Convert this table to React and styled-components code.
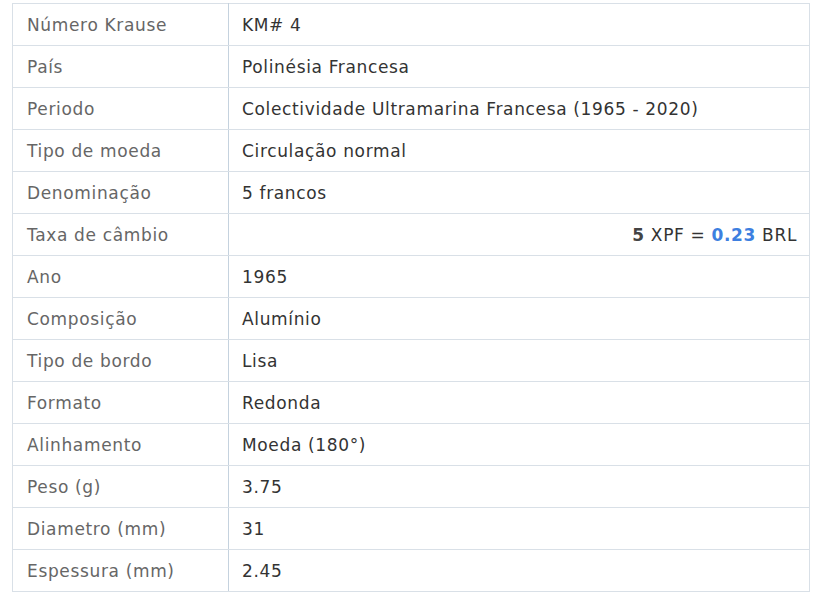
import React from "react";
import styled, { createGlobalStyle } from "styled-components";

const Global = createGlobalStyle`
  html, body { margin: 0; padding: 0; background: #fff; }
  body { font-family: "DejaVu Sans", Verdana, sans-serif; }
`;

const Page = styled.div`
  padding: 3px 18px 0 12px;
`;

const Table = styled.table`
  width: 798px;
  border-collapse: collapse;
  font-size: 17px;
  letter-spacing: 0.65px;
`;

const Row = styled.tr`
  height: 42px;
`;

const Label = styled.td`
  width: 187px;
  padding: 1px 14px 0 14px;
  color: #666;
  border: 1px solid #d9e0e7;
  border-right-color: #c5d2de;
  vertical-align: middle;
  white-space: nowrap;
`;

const Value = styled.td`
  padding: 1px 12px 0 13px;
  color: #333;
  border: 1px solid #d9e0e7;
  vertical-align: middle;
  text-align: ${(p) => (p.$right ? "right" : "left")};
  white-space: nowrap;
`;

const Strong = styled.b`
  color: #444;
`;

const Blue = styled.b`
  color: #3d7fe0;
`;

const rows = [
  ["Número Krause", "KM# 4"],
  ["País", "Polinésia Francesa"],
  ["Periodo", "Colectividade Ultramarina Francesa (1965 - 2020)"],
  ["Tipo de moeda", "Circulação normal"],
  ["Denominação", "5 francos"],
  ["Taxa de câmbio", null],
  ["Ano", "1965"],
  ["Composição", "Alumínio"],
  ["Tipo de bordo", "Lisa"],
  ["Formato", "Redonda"],
  ["Alinhamento", "Moeda (180°)"],
  ["Peso (g)", "3.75"],
  ["Diametro (mm)", "31"],
  ["Espessura (mm)", "2.45"],
];

export default function App() {
  return (
    <Page>
      <Global />
      <Table>
        <tbody>
          {rows.map(([k, v]) => (
            <Row key={k}>
              <Label>{k}</Label>
              {v === null ? (
                <Value $right>
                  <Strong>5</Strong> XPF = <Blue>0.23</Blue> BRL
                </Value>
              ) : (
                <Value>{v}</Value>
              )}
            </Row>
          ))}
        </tbody>
      </Table>
    </Page>
  );
}
